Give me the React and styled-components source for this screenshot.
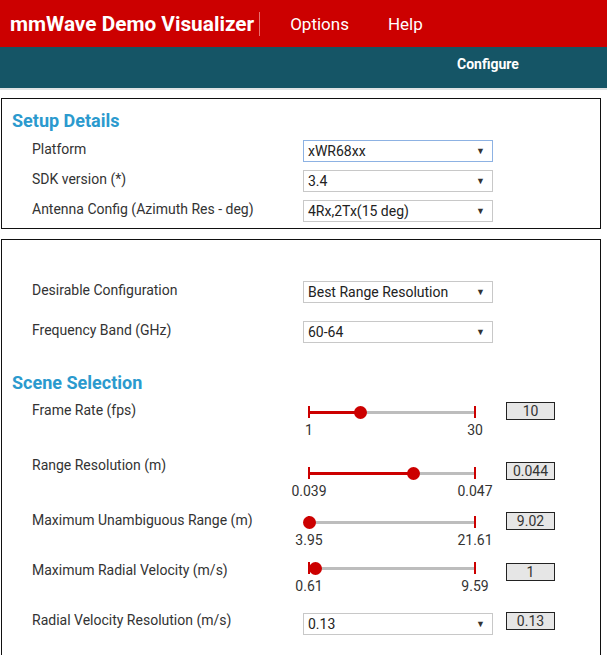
import React from 'react';
import styled, { createGlobalStyle } from 'styled-components';

const GlobalStyle = createGlobalStyle`
  body {
    margin: 0;
    background: #fff;
    font-family: Roboto, "Liberation Sans", Arial, sans-serif;
    color: #333;
  }
`;

const Page = styled.div`
  width: 607px;
`;

const TopBar = styled.header`
  height: 47px;
  background: #cc0000;
  display: flex;
  align-items: center;
  color: #fff;
`;

const Brand = styled.div`
  font-size: 20.8px;
  font-weight: 700;
  padding: 0 5px 0 10px;
  height: 24px;
  line-height: 24px;
  border-right: 1px solid #e87070;
`;

const MenuItem = styled.div`
  font-size: 17px;
  margin-left: ${(p) => p.gap}px;
`;

const SubBar = styled.nav`
  height: 43px;
  box-sizing: border-box;
  padding: 0 0 8px 457px;
  background: #155566;
  border-bottom: 2px solid #dfe3e4;
  display: flex;
  align-items: center;
  color: #fff;
  font-size: 14px;
  font-weight: 700;
`;

const Panel = styled.section`
  margin: ${(p) => p.top}px 6px 0 1px;
  border: 1px solid #111;
  padding: ${(p) => p.padTop}px 0 ${(p) => p.padBottom}px 0;
  display: flex;
  flex-direction: column;
`;

const Heading = styled.h2`
  margin: ${(p) => p.mt || 0}px 0 0 10px;
  font-size: 18px;
  line-height: 22px;
  font-weight: 700;
  color: #2b9ace;
`;

const Rows = styled.div`
  display: flex;
  flex-direction: column;
  gap: ${(p) => p.gap}px;
  margin-top: ${(p) => p.mt}px;
`;

const Row = styled.div`
  display: grid;
  grid-template-columns: 271px 190px 62px;
  padding-left: 30px;
  align-items: start;
  height: ${(p) => (p.h ? `${p.h}px` : 'auto')};
`;

const Label = styled.div`
  font-size: 14px;
  line-height: 17px;
  padding-top: 1px;
  color: #333;
  white-space: nowrap;
`;

const SelectBox = styled.div`
  height: 22px;
  box-sizing: border-box;
  border: 1px solid ${(p) => (p.focused ? '#8db2e3' : '#c8c8c8')};
  background: #fff;
  display: flex;
  align-items: center;
  justify-content: space-between;
  padding: 0 7px 0 4px;
  font-size: 14px;
  color: #222;
  margin-top: ${(p) => p.mt || 0}px;
`;

const Arrow = styled.span`
  font-size: 9px;
  color: #333;
`;

const ValueBox = styled.div`
  width: 49px;
  height: 18px;
  margin: ${(p) => p.mt || 0}px 0 0 13px;
  box-sizing: border-box;
  border: 1px solid #222;
  background: #e6e6e6;
  text-align: center;
  font-size: 14px;
  line-height: 16px;
  color: #333;
`;

const SliderWrap = styled.div`
  margin: ${(p) => p.mt}px 0 0 6px;
  width: 166px;
`;

const Track = styled.div`
  position: relative;
  height: 12px;
  &::before {
    content: '';
    position: absolute;
    left: 0;
    right: 0;
    top: 5px;
    height: 3px;
    background: #bdbdbd;
  }
`;

const Fill = styled.div`
  position: absolute;
  left: 0;
  top: 5px;
  height: 3px;
  background: #cc0000;
`;

const Tick = styled.div`
  position: absolute;
  top: 0;
  ${(p) => (p.end ? 'right: -1px;' : 'left: -1px;')}
  width: 2px;
  height: 12px;
  background: #cc0000;
`;

const Thumb = styled.div`
  position: absolute;
  top: 0;
  width: 13px;
  height: 13px;
  margin-left: -6px;
  border-radius: 50%;
  background: #cc0000;
`;

const Scale = styled.div`
  display: flex;
  justify-content: space-between;
  margin-top: 4px;
  font-size: 14px;
  line-height: 17px;
  color: #333;
`;

const ScaleMark = styled.span`
  width: 0;
  display: flex;
  justify-content: center;
  white-space: nowrap;
`;

const Select = ({ value, focused, mt }) => (
  <SelectBox focused={focused} mt={mt}>
    <span>{value}</span>
    <Arrow>▼</Arrow>
  </SelectBox>
);

const Slider = ({ min, max, pos, mt }) => (
  <SliderWrap mt={mt}>
    <Track>
      <Tick />
      <Tick end />
      <Fill style={{ width: `${pos}px` }} />
      <Thumb style={{ left: `${pos}px` }} />
    </Track>
    <Scale>
      <ScaleMark>{min}</ScaleMark>
      <ScaleMark>{max}</ScaleMark>
    </Scale>
  </SliderWrap>
);

const setup = [
  { label: 'Platform', value: 'xWR68xx', focused: true },
  { label: 'SDK version (*)', value: '3.4' },
  { label: 'Antenna Config (Azimuth Res - deg)', value: '4Rx,2Tx(15 deg)' },
];

const sliders = [
  { label: 'Frame Rate (fps)', min: '1', max: '30', pos: 51, value: '10', h: 55, mt: 5, boxMt: 1 },
  { label: 'Range Resolution (m)', min: '0.039', max: '0.047', pos: 104, value: '0.044', h: 55, mt: 11, boxMt: 6 },
  { label: 'Maximum Unambiguous Range (m)', min: '3.95', max: '21.61', pos: 0, value: '9.02', h: 50, mt: 5, boxMt: 1 },
  { label: 'Maximum Radial Velocity (m/s)', min: '0.61', max: '9.59', pos: 6, value: '1', h: 50, mt: 1, boxMt: 2 },
];

export default function App() {
  return (
    <Page>
      <GlobalStyle />
      <TopBar>
        <Brand>mmWave Demo Visualizer</Brand>
        <MenuItem gap={30}>Options</MenuItem>
        <MenuItem gap={39}>Help</MenuItem>
      </TopBar>
      <SubBar>Configure</SubBar>

      <Panel top={8} padTop={11} padBottom={6}>
        <Heading>Setup Details</Heading>
        <Rows gap={8} mt={8}>
          {setup.map((s) => (
            <Row key={s.label}>
              <Label>{s.label}</Label>
              <Select value={s.value} focused={s.focused} />
            </Row>
          ))}
        </Rows>
      </Panel>

      <Panel top={10} padTop={41} padBottom={30}>
        <Rows gap={18} mt={0}>
          <Row>
            <Label>Desirable Configuration</Label>
            <Select value="Best Range Resolution" />
          </Row>
          <Row>
            <Label>Frequency Band (GHz)</Label>
            <Select value="60-64" />
          </Row>
        </Rows>
        <Heading mt={29}>Scene Selection</Heading>
        <Rows gap={0} mt={7}>
          {sliders.map((s) => (
            <Row key={s.label} h={s.h}>
              <Label>{s.label}</Label>
              <Slider min={s.min} max={s.max} pos={s.pos} mt={s.mt} />
              <ValueBox mt={s.boxMt}>{s.value}</ValueBox>
            </Row>
          ))}
          <Row>
            <Label>Radial Velocity Resolution (m/s)</Label>
            <Select value="0.13" mt={2} />
            <ValueBox mt={1}>0.13</ValueBox>
          </Row>
        </Rows>
      </Panel>
    </Page>
  );
}
